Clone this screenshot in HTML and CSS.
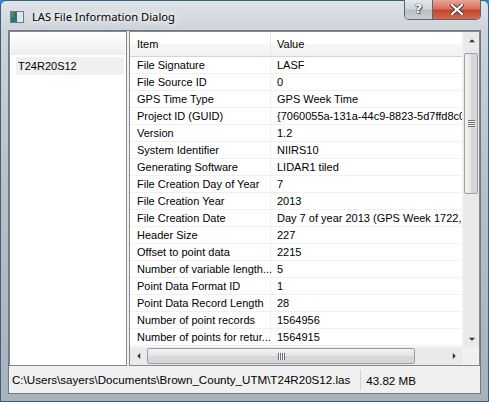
FILE: index.html
```html
<!DOCTYPE html>
<html lang="en">
<head>
  <meta charset="UTF-8">
  <title>LAS File Information Dialog</title>
  <link rel="stylesheet" href="styles.css">
</head>
<body>
  <div class="window">
    <div class="titlebar">
      <svg class="app-icon" width="14" height="12" viewBox="0 0 14 12">
        <rect x="0.5" y="0.5" width="13" height="11" fill="#f4f6f8" stroke="#6d7b88"/>
        <rect x="1" y="1" width="6" height="10" fill="#2f6f78"/>
        <rect x="1" y="1" width="3" height="5" fill="#4c8c5a"/>
        <rect x="7" y="1" width="6" height="10" fill="#dfe6ec"/>
      </svg>
      <span class="title">LAS File Information Dialog</span>
      <div class="caption-btns">
        <div class="btn-help">?</div>
        <div class="btn-close">
          <svg width="14" height="11" viewBox="0 0 14 11">
            <path d="M2 1 L12 10 M12 1 L2 10" stroke="#3b3b3b" stroke-width="4" stroke-linecap="square"/>
            <path d="M2 1 L12 10 M12 1 L2 10" stroke="#ffffff" stroke-width="2.2" stroke-linecap="square"/>
          </svg>
        </div>
      </div>
    </div>

    <div class="client">
      <div class="panes">
        <div class="file-list">
          <div class="list-header"></div>
          <div class="list-item">T24R20S12</div>
        </div>

        <div class="info-pane">
          <div class="tree">
            <div class="tree-header">
              <div class="col-item">Item</div>
              <div class="col-value">Value</div>
            </div>
            <div class="tree-rows">
              <div class="row"><span>File Signature</span><span>LASF</span></div>
              <div class="row"><span>File Source ID</span><span>0</span></div>
              <div class="row"><span>GPS Time Type</span><span>GPS Week Time</span></div>
              <div class="row"><span>Project ID (GUID)</span><span>{7060055a-131a-44c9-8823-5d7ffd8c0</span></div>
              <div class="row"><span>Version</span><span>1.2</span></div>
              <div class="row"><span>System Identifier</span><span>NIIRS10</span></div>
              <div class="row"><span>Generating Software</span><span>LIDAR1 tiled</span></div>
              <div class="row"><span>File Creation Day of Year</span><span>7</span></div>
              <div class="row"><span>File Creation Year</span><span>2013</span></div>
              <div class="row"><span>File Creation Date</span><span>Day 7 of year 2013 (GPS Week 1722,</span></div>
              <div class="row"><span>Header Size</span><span>227</span></div>
              <div class="row"><span>Offset to point data</span><span>2215</span></div>
              <div class="row"><span>Number of variable length...</span><span>5</span></div>
              <div class="row"><span>Point Data Format ID</span><span>1</span></div>
              <div class="row"><span>Point Data Record Length</span><span>28</span></div>
              <div class="row"><span>Number of point records</span><span>1564956</span></div>
              <div class="row"><span>Number of points for retur...</span><span>1564915</span></div>
            </div>
          </div>

          <div class="vscroll">
            <div class="arrow arrow-up"></div>
            <div class="vtrack">
              <div class="vthumb"><div class="grip-h"></div></div>
            </div>
            <div class="arrow arrow-down"></div>
          </div>

          <div class="hscroll">
            <div class="arrow arrow-left"></div>
            <div class="htrack">
              <div class="hthumb"><div class="grip-v"></div></div>
            </div>
            <div class="arrow arrow-right"></div>
          </div>
          <div class="corner"></div>
        </div>
      </div>

      <div class="statusbar">
        <div class="status-path">C:\Users\sayers\Documents\Brown_County_UTM\T24R20S12.las</div>
        <div class="status-size">43.82 MB</div>
      </div>
    </div>
  </div>
</body>
</html>
```

FILE: styles.css
```css
* {
  margin: 0;
  padding: 0;
  box-sizing: border-box;
}

body {
  width: 489px;
  height: 402px;
  background: #2f8ad3;
  font-family: "Liberation Sans", Arial, sans-serif;
  font-size: 11px;
  color: #000;
  overflow: hidden;
}

.window {
  width: 489px;
  height: 402px;
  border: 1px solid #3c5f80;
  border-radius: 6px 6px 0 0;
  background: linear-gradient(to bottom, #dfe4e9 0px, #cdd3d9 30px, #b6bec6 200px, #a9b2bb 402px);
  display: flex;
  flex-direction: column;
  padding: 0 7px 7px 7px;
}

/* title bar */
.titlebar {
  height: 29px;
  display: flex;
  align-items: center;
  position: relative;
}

.app-icon {
  margin-left: 2px;
  margin-top: 2px;
}

.title {
  margin-left: 8px;
  margin-top: 1px;
  font-family: "Noto Sans", "Open Sans", sans-serif;
  font-size: 11.2px;
  color: #000;
  text-shadow: 0 0 8px #ffffff, 0 0 4px #ffffff;
}

.caption-btns {
  position: absolute;
  top: -1px;
  right: 0;
  display: flex;
  height: 20px;
  border: 1px solid #5b6570;
  border-top: none;
  border-radius: 0 0 5px 5px;
  overflow: hidden;
}

.btn-help {
  width: 28px;
  background: linear-gradient(to bottom, #e4e8ec 0%, #cfd5db 45%, #b7bfc7 55%, #c6cdd4 100%);
  border-right: 1px solid #5b6570;
  text-align: center;
  font-family: "DejaVu Sans", sans-serif;
  font-weight: bold;
  font-size: 13px;
  line-height: 18px;
  color: #ffffff;
  text-shadow: 0 0 1px #333, 0 0 1px #333, 1px 1px 1px #555;
}

.btn-close {
  width: 47px;
  background: linear-gradient(to bottom, #e8a595 0%, #d8705c 45%, #c7432a 55%, #d36a4f 100%);
  display: flex;
  justify-content: center;
  align-items: center;
}

/* client area */
.client {
  flex: 1;
  background: #f0f0f0;
  border: 1px solid #6f7a85;
  display: flex;
  flex-direction: column;
}

.panes {
  flex: 1;
  display: flex;
  gap: 2px;
}

.file-list {
  width: 118px;
  background: #fff;
  border: 1px solid #828790;
  padding: 1px 2px 0 6px;
}

.list-header {
  height: 23px;
  background: linear-gradient(to bottom, #ffffff, #ededed);
  margin-left: -5px;
  margin-right: -1px;
  border-bottom: 1px solid #ffffff;
}

.list-item {
  height: 18px;
  line-height: 18px;
  background: #f0f0f0;
  padding-left: 2px;
  margin-top: 1px;
}

.info-pane {
  flex: 1;
  background: #fff;
  border: 1px solid #828790;
  display: grid;
  grid-template-columns: 1fr 17px;
  grid-template-rows: 1fr 18px;
}

.tree {
  overflow: hidden;
}

.tree-header {
  height: 25px;
  display: flex;
  background: linear-gradient(to bottom, #ffffff 0%, #ffffff 50%, #f6f7f9 51%, #f1f2f4 100%);
  border-bottom: 1px solid #d5d5d5;
  line-height: 24px;
}

.col-item {
  width: 141px;
  padding-left: 7px;
  border-right: 1px solid #e3e8ee;
}

.col-value {
  padding-left: 6px;
}

.row {
  height: 17px;
  display: flex;
  border-bottom: 1px solid #f0f0f0;
  line-height: 16px;
  white-space: nowrap;
}

.row span:first-child {
  width: 141px;
  padding-left: 7px;
  border-right: 1px solid #f0f0f0;
  flex-shrink: 0;
}

.row span:last-child {
  padding-left: 6px;
}

/* scrollbars */
.vscroll {
  background: #eaeaea;
  border-left: 1px solid #f4f4f4;
  display: flex;
  flex-direction: column;
}

.hscroll {
  background: #eaeaea;
  display: flex;
  align-items: stretch;
}

.corner {
  background: #f0f0f0;
}

.arrow {
  width: 17px;
  height: 17px;
  position: relative;
  flex-shrink: 0;
}

.arrow::after {
  content: "";
  position: absolute;
  left: 50%;
  top: 50%;
  width: 0;
  height: 0;
  border: 3px solid transparent;
}

.arrow-up::after {
  border-bottom: 3px solid #333;
  border-top: none;
  transform: translate(-50%, -60%);
}

.arrow-down::after {
  border-top: 3px solid #333;
  border-bottom: none;
  transform: translate(-50%, -40%);
}

.arrow-left::after {
  border-right: 3px solid #333;
  border-left: none;
  transform: translate(-60%, -50%);
}

.arrow-right::after {
  border-left: 3px solid #333;
  border-right: none;
  transform: translate(-40%, -50%);
}

.vtrack {
  flex: 1;
  padding: 0 1px;
}

.vthumb {
  height: 141px;
  margin-top: 4px;
  border: 1px solid #9b9fa4;
  border-radius: 2px;
  background: linear-gradient(to right, #f3f3f3, #e4e4e4 50%, #d6d6d6 51%, #d9d9d9);
  display: flex;
  justify-content: center;
  align-items: center;
}

.htrack {
  flex: 1;
  padding: 1px 0;
}

.hthumb {
  height: 100%;
  margin-right: 30px;
  border: 1px solid #9b9fa4;
  border-radius: 2px;
  background: linear-gradient(to bottom, #f3f3f3, #e4e4e4 50%, #d6d6d6 51%, #d9d9d9);
  display: flex;
  justify-content: center;
  align-items: center;
}

.grip-h {
  width: 7px;
  height: 7px;
  background: repeating-linear-gradient(to bottom, #6e6e6e 0px, #6e6e6e 1px, #f7f7f7 1px, #f7f7f7 2px);
}

.grip-v {
  width: 7px;
  height: 7px;
  background: repeating-linear-gradient(to right, #6e6e6e 0px, #6e6e6e 1px, #f7f7f7 1px, #f7f7f7 2px);
}

/* status bar */
.statusbar {
  height: 27px;
  display: flex;
  align-items: center;
  font-size: 11.6px;
  padding-top: 1px;
}

.status-path {
  padding-left: 3px;
  padding-right: 10px;
  border-right: 1px solid #d4d4d4;
  line-height: 20px;
}

.status-size {
  padding-left: 5px;
}
```
